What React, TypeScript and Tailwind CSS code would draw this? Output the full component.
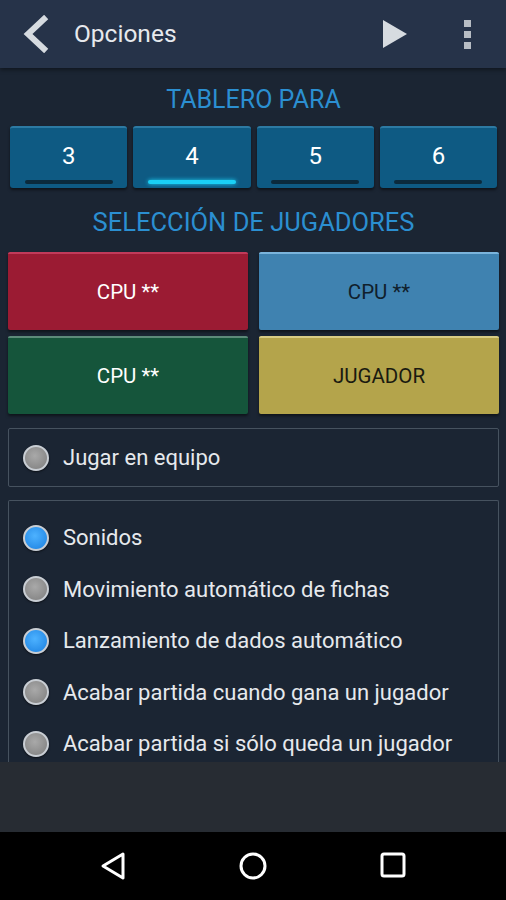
import { useState } from "react";

const BOARD_SIZES = [3, 4, 5, 6];

const PLAYERS = [
  { label: "CPU **", bg: "bg-[#9b1b33]", top: "border-t-[#c23a5a]", text: "text-white" },
  { label: "CPU **", bg: "bg-[#3f82b0]", top: "border-t-[#7ab4dc]", text: "text-[#10202c]" },
  { label: "CPU **", bg: "bg-[#15553b]", top: "border-t-[#5d8a7a]", text: "text-white" },
  { label: "JUGADOR", bg: "bg-[#b4a44b]", top: "border-t-[#d8cc84]", text: "text-[#1a1a10]" },
];

const OPTIONS = [
  { label: "Sonidos", on: true },
  { label: "Movimiento automático de fichas", on: false },
  { label: "Lanzamiento de dados automático", on: true },
  { label: "Acabar partida cuando gana un jugador", on: false },
  { label: "Acabar partida si sólo queda un jugador", on: false },
];

function Radio({ on }: { on: boolean }) {
  return (
    <span
      className={`w-[26px] h-[26px] shrink-0 rounded-full border-2 border-[#c9ced4] ${
        on
          ? "bg-[radial-gradient(circle_at_45%_40%,#4db2ff,#1a7fe0)]"
          : "bg-[radial-gradient(circle_at_45%_40%,#a9a9a9,#7d7d7d)]"
      } shadow-[0_1px_2px_rgba(0,0,0,0.6)]`}
    />
  );
}

export default function App() {
  const [board, setBoard] = useState(4);
  const [team, setTeam] = useState(false);
  const [opts, setOpts] = useState(OPTIONS.map((o) => o.on));

  return (
    <div
      className="w-[506px] h-[900px] flex flex-col bg-[#1b2533] overflow-hidden"
      style={{ fontFamily: "Roboto, 'Liberation Sans', sans-serif" }}
    >
      {/* Action bar */}
      <div className="h-[68px] shrink-0 flex items-center bg-[#263349] shadow-[0_2px_4px_rgba(0,0,0,0.4)]">
        <svg className="ml-[20px]" width="30" height="38" viewBox="0 0 30 38">
          <path d="M24 4 L8 19 L24 34" fill="none" stroke="#d6dbe0" strokeWidth="6" strokeLinecap="square" />
        </svg>
        <span className="ml-[24px] text-[24.5px] text-[#e6e9ed]">Opciones</span>
        <div className="flex-1" />
        <svg width="26" height="30" viewBox="0 0 26 30" className="mr-[56px]">
          <path d="M1 1 L25 15 L1 29 Z" fill="#d6dbe0" />
        </svg>
        <div className="mr-[35px] flex flex-col gap-[4px]">
          <span className="w-[7px] h-[7px] bg-[#b7bdc4]" />
          <span className="w-[7px] h-[7px] bg-[#b7bdc4]" />
          <span className="w-[7px] h-[7px] bg-[#b7bdc4]" />
        </div>
      </div>

      <div className="flex-1 min-h-0 overflow-hidden flex flex-col pl-[8px] pr-[7px]">
        <h2 className="mt-[18px] text-center text-[25px] leading-[28px] text-[#2b8fd1]">TABLERO PARA</h2>
        <div className="mt-[12px] px-[2px] grid grid-cols-4 gap-[6px]">
          {BOARD_SIZES.map((n) => (
            <button
              key={n}
              onClick={() => setBoard(n)}
              className="h-[62px] rounded-[3px] bg-[#0e5a83] border-t-2 border-t-[#2d7aa3] shadow-[0_2px_3px_rgba(0,0,0,0.5)] flex flex-col items-center"
            >
              <span className="mt-[14px] text-[24px] leading-[28px] text-white">{n}</span>
              <span
                className={`mt-[10px] w-[88px] h-[4px] rounded-full ${
                  board === n ? "bg-[#1ad0f5] shadow-[0_0_4px_#1ad0f5]" : "bg-[#0b2a3c]"
                }`}
              />
            </button>
          ))}
        </div>

        <h2 className="mt-[20px] text-center text-[25.5px] leading-[28px] text-[#2b8fd1]">SELECCIÓN DE JUGADORES</h2>
        <div className="mt-[16px] grid grid-cols-2 gap-x-[11px] gap-y-[6px]">
          {PLAYERS.map((p, i) => (
            <div
              key={i}
              className={`h-[78px] rounded-[2px] border-t-2 ${p.top} ${p.bg} ${p.text} flex items-center justify-center text-[20.5px] shadow-[0_2px_3px_rgba(0,0,0,0.5)]`}
            >
              {p.label}
            </div>
          ))}
        </div>

        <button
          onClick={() => setTeam(!team)}
          className="mt-[14px] h-[59px] shrink-0 border border-[#46525f] rounded-[2px] flex items-center pl-[14px] gap-[14px] text-left"
        >
          <Radio on={team} />
          <span className="text-[22px] text-[#e6e9ed]">Jugar en equipo</span>
        </button>

        <div className="mt-[13px] flex-1 min-h-0 overflow-hidden border border-b-0 border-[#46525f] rounded-t-[2px] pt-[11px] flex flex-col">
          {OPTIONS.map((o, i) => (
            <button
              key={o.label}
              onClick={() => setOpts(opts.map((v, j) => (j === i ? !v : v)))}
              className="h-[51.5px] shrink-0 flex items-center pl-[14px] gap-[14px] text-left"
            >
              <Radio on={opts[i]} />
              <span className="text-[22px] text-[#e6e9ed] whitespace-nowrap">{o.label}</span>
            </button>
          ))}
        </div>
      </div>

      <div className="h-[70px] shrink-0 bg-[#272c33]" />

      {/* Navigation bar */}
      <div className="h-[68px] shrink-0 bg-black flex items-center justify-center">
        <div className="w-[420px] grid grid-cols-3 justify-items-center">
          <svg width="28" height="30" viewBox="0 0 28 30">
            <path d="M24 3 L4 15 L24 27 Z" fill="none" stroke="#fff" strokeWidth="3" strokeLinejoin="round" />
          </svg>
          <svg width="30" height="30" viewBox="0 0 30 30">
            <circle cx="15" cy="15" r="12" fill="none" stroke="#fff" strokeWidth="3" />
          </svg>
          <svg width="28" height="28" viewBox="0 0 28 28">
            <rect x="3" y="3" width="22" height="22" rx="2" fill="none" stroke="#fff" strokeWidth="3" />
          </svg>
        </div>
      </div>
    </div>
  );
}
